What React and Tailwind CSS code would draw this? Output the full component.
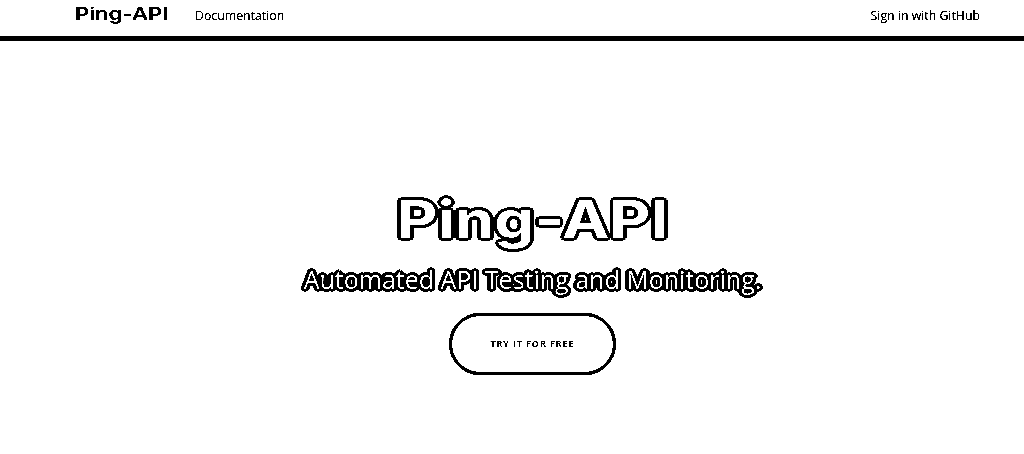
export default function App() {
  return (
    <div className="min-h-[454px] overflow-hidden bg-white text-black brightness-[0.8] contrast-[100] font-['Open_Sans','Noto_Sans',sans-serif]">
      <header className="flex h-[41px] items-start justify-between border-b-[5px] border-black pl-[75px] pr-[44px]">
        <div className="flex h-[30px] items-center">
          <span className="w-[120px] origin-left scale-x-[1.3] font-['Inter',sans-serif] text-[17px] font-semibold">Ping-API</span>
          <a className="pt-[2px] text-[12.3px]">Documentation</a>
        </div>
        <a className="flex h-[32px] items-center text-[12.3px]">Sign in with GitHub</a>
      </header>
      <main className="flex flex-col items-center pl-[41px] pt-[143px]">
        <h1 className="scale-x-[1.22] font-['Inter',sans-serif] text-[52px] leading-[72px] font-bold text-white [text-shadow:3px_0_0_#000,-3px_0_0_#000,0_3px_0_#000,0_-3px_0_#000,2px_2px_0_#000,-2px_-2px_0_#000,2px_-2px_0_#000,-2px_2px_0_#000]">
          Ping-API
        </h1>
        <p className="mt-[7px] text-[25px] leading-[32px] font-medium text-white [text-shadow:3px_0_0_#000,-3px_0_0_#000,0_3px_0_#000,0_-3px_0_#000,2px_2px_0_#000,-2px_-2px_0_#000,2px_-2px_0_#000,-2px_2px_0_#000,3px_1px_0_#000,-3px_1px_0_#000,3px_-1px_0_#000,-3px_-1px_0_#000]">
          Automated API Testing and Monitoring.
        </p>
        <button className="mt-[18px] flex h-[62px] w-[167px] items-center justify-center rounded-full border-[3px] border-black text-[9px] font-semibold tracking-[1px]">
          TRY IT FOR FREE
        </button>
      </main>
    </div>
  );
}
